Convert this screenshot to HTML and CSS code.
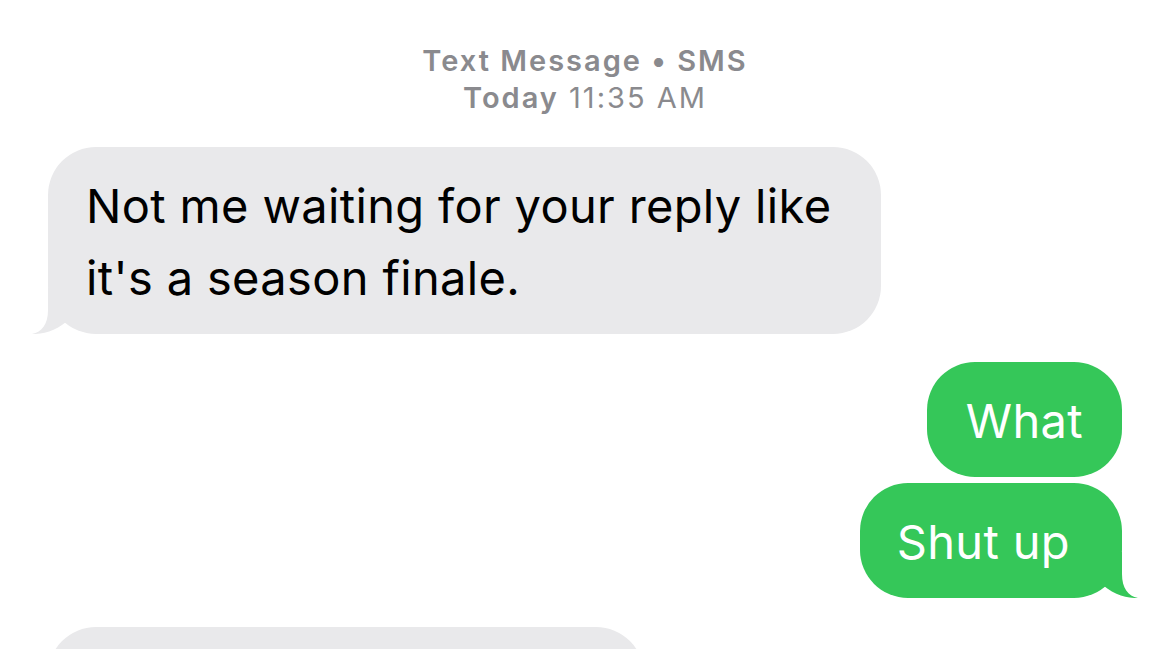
FILE: index.html
```html
<!DOCTYPE html>
<html lang="en">
<head>
<meta charset="utf-8">
<title>Messages</title>
<link rel="stylesheet" href="styles.css">
</head>
<body>
<main class="thread">
  <header class="meta">
    <div class="meta-line strong">Text Message • SMS</div>
    <div class="meta-line"><span class="strong">Today</span> 11:35 AM</div>
  </header>

  <div class="row row-in">
    <div class="bubble bubble-in has-tail">
      Not me waiting for your reply like<br>it's a season finale.
      <svg class="tail tail-in" viewBox="-16 -46 42 46" aria-hidden="true"><path d="M0,-46 L0,-24 C0,-10 -6,-2 -16,0 C-3,0.5 10,-4 24,-17 L24,-46 Z"/></svg>
    </div>
  </div>

  <div class="row row-out first-out">
    <div class="bubble bubble-out">What</div>
  </div>
  <div class="row row-out">
    <div class="bubble bubble-out has-tail">
      Shut up
      <svg class="tail tail-out" viewBox="-16 -46 42 46" aria-hidden="true"><path d="M0,-46 L0,-24 C0,-10 -6,-2 -16,0 C-3,0.5 10,-4 24,-17 L24,-46 Z"/></svg>
    </div>
  </div>

  <div class="row row-in last-in">
    <div class="bubble bubble-in bubble-partial"></div>
  </div>
</main>
</body>
</html>
```

FILE: styles.css
```css
html, body {
  margin: 0;
  padding: 0;
  background: #ffffff;
}

body {
  height: 649px;
  overflow: hidden;
  font-family: Inter, "Noto Sans", "Liberation Sans", sans-serif;
}

.thread {
  display: flex;
  flex-direction: column;
  padding: 42px 48px 0 48px;
}

.meta {
  text-align: center;
  color: #8a8a8e;
  font-size: 29px;
  line-height: 37px;
  font-weight: 400;
  letter-spacing: 2px;
}

.meta .strong {
  font-weight: 560;
}

.row {
  display: flex;
}

.row-in {
  justify-content: flex-start;
  margin-top: 31px;
}

.row-out {
  justify-content: flex-end;
  margin-top: 6px;
}

.row-out.first-out {
  margin-top: 28px;
}

.row-in.last-in {
  margin-top: 29px;
}

.bubble {
  position: relative;
  font-size: 47px;
  line-height: 72px;
  padding: 23px 39px 20px 39px;
  border-radius: 48px;
  letter-spacing: 0.35px;
}

.bubble-in {
  background: #e9e9eb;
  color: #000000;
  padding-left: 38px;
  padding-right: 50px;
}

.bubble-out {
  background: #35c759;
  color: #ffffff;
}

.bubble-out.has-tail {
  padding-left: 37px;
  padding-right: 52px;
}

.bubble-partial {
  width: 508px;
  height: 72px;
}

.tail {
  position: absolute;
  bottom: 0;
  width: 42px;
  height: 46px;
}

.tail-in {
  left: -16px;
  fill: #e9e9eb;
}

.tail-out {
  right: -16px;
  fill: #35c759;
  transform: scaleX(-1);
}
```
